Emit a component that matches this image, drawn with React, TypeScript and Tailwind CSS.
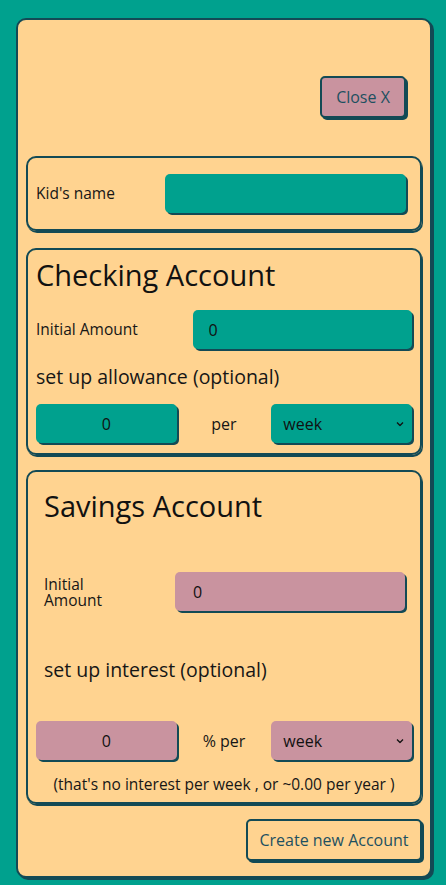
import React from 'react';

const font = { fontFamily: '"Open Sans", "Noto Sans", sans-serif' };

const Chevron = () => (
  <svg className="absolute right-[8px] top-1/2 -translate-y-1/2" width="8" height="5" viewBox="0 0 8 5" fill="none">
    <path d="M1 1L4 4L7 1" stroke="#111" strokeWidth="1.3" />
  </svg>
);

const Field = ({ value, tone, className }: { value: string; tone: 'teal' | 'pink'; className: string }) => (
  <div
    className={`${className} h-[39px] rounded-[5px] shadow-[2px_2px_0_#134a55] flex items-center text-[16px] text-[#111] ${
      tone === 'teal' ? 'bg-[#00a18e]' : 'bg-[#c9939f]'
    }`}
  >
    {value}
  </div>
);

const Select = ({ tone }: { tone: 'teal' | 'pink' }) => (
  <div
    className={`relative w-[141px] h-[39px] rounded-[5px] shadow-[2px_2px_0_#134a55] flex items-center pl-3 text-[16px] text-[#111] ${
      tone === 'teal' ? 'bg-[#00a18e]' : 'bg-[#c9939f]'
    }`}
  >
    week
    <Chevron />
  </div>
);

const App = () => {
  return (
    <div className="min-h-screen bg-[#00a18e] pt-[18px] pb-2" style={font}>
      <div className="ml-4 w-[416px] bg-[#ffd390] border-2 border-[#134a55] rounded-[10px] shadow-[2px_2px_0_#134a55] px-2 pb-[15px]">
        {/* Close */}
        <div className="flex justify-end mt-[56px] mr-4">
          <button className="w-[86px] h-[42px] bg-[#c9939f] border-2 border-[#134a55] rounded-[5px] shadow-[2px_2px_0_#134a55] text-[16px] text-[#1d5060]">
            Close X
          </button>
        </div>

        {/* Kid's name */}
        <div className="mt-[38px] border-2 border-[#134a55] rounded-[10px] shadow-[1px_2px_0_#134a55] px-2 pt-4 pb-4 flex items-center">
          <div className="w-[129px] text-[15.5px] text-[#161616]">Kid's name</div>
          <Field value="" tone="teal" className="w-[241px]" />
        </div>

        {/* Checking */}
        <div className="mt-[17px] border-2 border-[#134a55] rounded-[10px] shadow-[1px_2px_0_#134a55] px-2 pt-2 pb-2">
          <div className="h-[34px] flex items-center text-[29px] text-[#111]">Checking Account</div>
          <div className="mt-[18px] h-[41px] flex items-start">
            <div className="w-[157px] h-[39px] flex items-center text-[15.5px] text-[#161616]">Initial Amount</div>
            <Field value="0" tone="teal" className="w-[220px] pl-4" />
          </div>
          <div className="mt-3 h-[28px] flex items-center text-[19.5px] text-[#161616]">set up allowance (optional)</div>
          <div className="mt-[13px] h-[41px] flex items-start">
            <Field value="0" tone="teal" className="w-[141px] justify-center" />
            <div className="w-[95px] h-[39px] flex items-center justify-center text-[16px] text-[#161616]">per</div>
            <Select tone="teal" />
          </div>
        </div>

        {/* Savings */}
        <div className="mt-[15px] border-2 border-[#134a55] rounded-[10px] shadow-[1px_2px_0_#134a55] px-2 pt-[17px] pb-[6px]">
          <div className="pl-2 h-[34px] flex items-center text-[29px] text-[#111]">Savings Account</div>
          <div className="mt-[49px] h-[41px] flex items-start pl-2">
            <div className="w-[131px] h-[39px] flex items-center text-[15.5px] text-[#161616]">
              <span className="block w-[70px] leading-4">Initial Amount</span>
            </div>
            <Field value="0" tone="pink" className="w-[230px] pl-[18px]" />
          </div>
          <div className="mt-[43px] pl-2 h-[28px] flex items-center text-[19.5px] text-[#161616]">set up interest (optional)</div>
          <div className="mt-[37px] h-[41px] flex items-start">
            <Field value="0" tone="pink" className="w-[141px] justify-center" />
            <div className="w-[95px] h-[39px] flex items-center justify-center text-[16px] text-[#161616]">% per</div>
            <Select tone="pink" />
          </div>
          <div className="mt-3 h-[22px] flex items-center justify-center text-[15.5px] text-[#161616]">
            (that's no interest per week , or ~0.00 per year )
          </div>
        </div>

        {/* Create */}
        <div className="flex justify-end mt-[15px]">
          <button className="w-[176px] h-[42px] bg-[#ffd390] border-2 border-[#134a55] rounded-[5px] shadow-[2px_2px_0_#134a55] text-[16px] text-[#1d5060]">
            Create new Account
          </button>
        </div>
      </div>
    </div>
  );
};

export default App;
